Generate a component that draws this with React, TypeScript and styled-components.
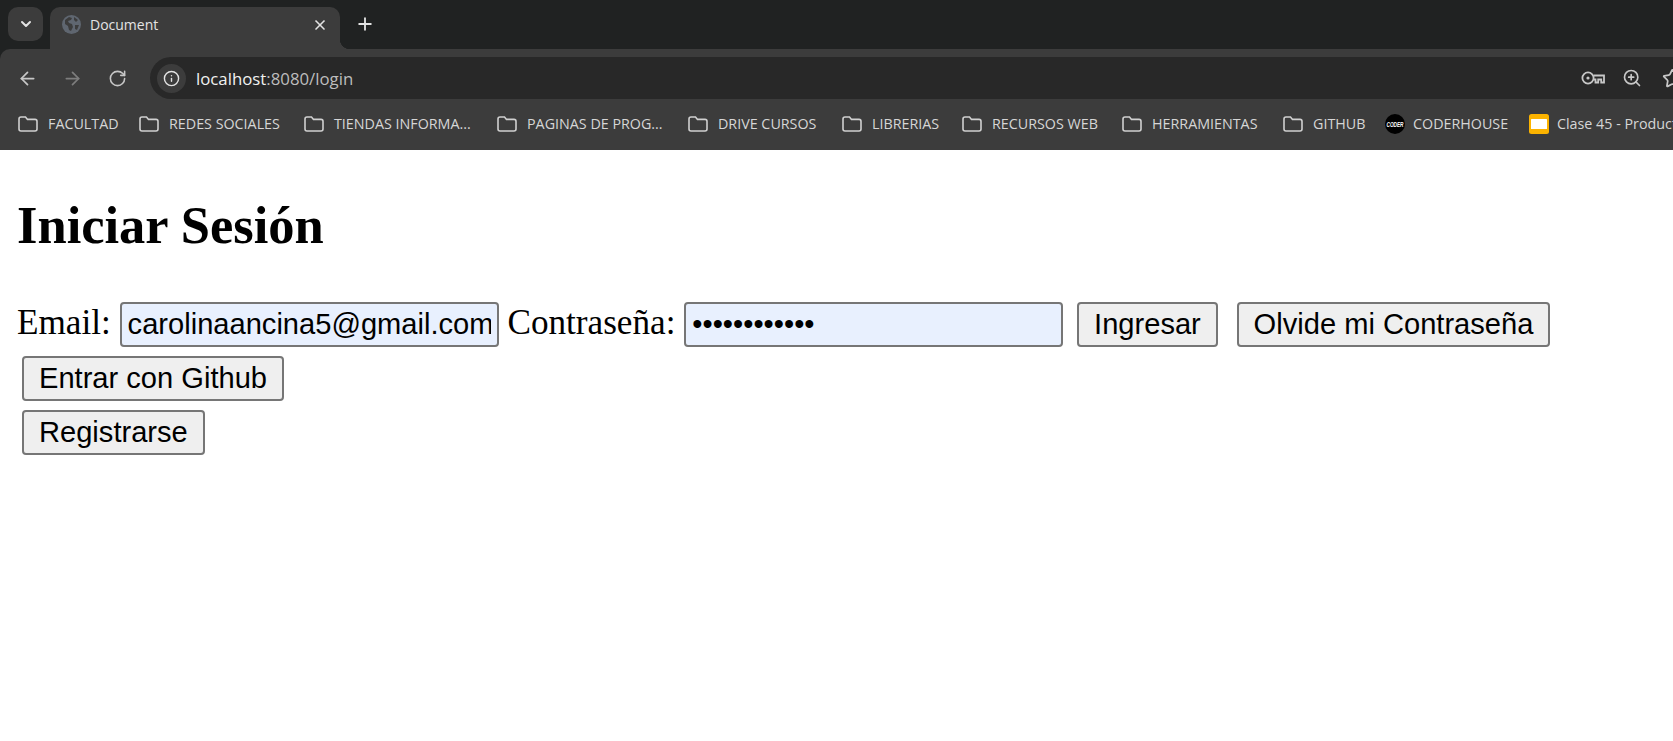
import React from "react";
import { createGlobalStyle, styled } from "styled-components";
import { ArrowLeft, ArrowRight, ChevronDown, Info, Plus, RotateCw, Star, X, ZoomIn } from "lucide-react";

const GlobalStyle = createGlobalStyle`
  html, body {
    margin: 0;
    height: 100%;
    overflow: hidden;
    background: #fff;
  }
`;

const Browser = styled.div`
  background: #202222;
  color: #e3e3e3;
  font-family: "Open Sans", "Noto Sans", sans-serif;
`;

const TabStrip = styled.div`
  height: 49px;
  display: flex;
  align-items: flex-start;
  padding: 7px 0 0 8px;
  box-sizing: border-box;
`;

const TabSearch = styled.div`
  width: 35px;
  height: 34px;
  border-radius: 10px;
  background: #3c3c3c;
  display: flex;
  align-items: center;
  justify-content: center;
  margin-right: 7px;
`;

const Tab = styled.div`
  position: relative;
  width: 290px;
  height: 42px;
  background: #3c3c3c;
  border-radius: 10px 10px 0 0;
  display: flex;
  align-items: center;
  padding: 0 12px 7px 12px;
  box-sizing: border-box;
  font-size: 14px;

  &::after {
    content: "";
    position: absolute;
    right: -10px;
    bottom: 0;
    width: 10px;
    height: 10px;
    background: radial-gradient(circle at 100% 0, transparent 10px, #3c3c3c 10.5px);
  }
`;

const TabTitle = styled.span`
  flex: 1;
  margin-left: 9px;
`;

const NewTab = styled.div`
  width: 50px;
  height: 34px;
  display: flex;
  align-items: center;
  justify-content: center;
`;

const Toolbar = styled.div`
  height: 50px;
  background: #3c3c3c;
  border-radius: 10px 0 0 0;
  display: flex;
  align-items: center;
  padding: 8px 0 0 5px;
  box-sizing: border-box;
`;

const NavButton = styled.div<{ $dim?: boolean }>`
  width: 45px;
  height: 36px;
  display: flex;
  align-items: center;
  justify-content: center;
  color: ${(p) => (p.$dim ? "#7d7d7d" : "#c7c7c7")};
`;

const AddressBar = styled.div`
  flex: 1;
  height: 42px;
  margin-left: 10px;
  background: #282828;
  border-radius: 21px 0 0 21px;
  display: flex;
  align-items: center;
  padding: 0 0 0 7px;
  font-size: 16.8px;
  overflow: hidden;
`;

const SiteInfo = styled.div`
  width: 29px;
  height: 29px;
  border-radius: 50%;
  background: #3c3c3c;
  display: flex;
  align-items: center;
  justify-content: center;
  margin-right: 10px;
`;

const Url = styled.span`
  flex: 1;
  color: #bdbdbd;

  b {
    font-weight: 400;
    color: #f1f1f1;
  }
`;

const AddressActions = styled.div`
  display: flex;
  align-items: center;
  gap: 17px;
  color: #c7c7c7;
  margin-right: -10px;

  svg:last-child {
    margin-left: 3px;
  }
`;

const BookmarksBar = styled.div`
  height: 51px;
  background: #3c3c3c;
  display: flex;
  align-items: center;
  padding: 0 0 2px 18px;
  box-sizing: border-box;
  font-size: 14.3px;
  white-space: nowrap;
  overflow: hidden;
`;

const Bookmark = styled.div<{ $width?: number; $gap?: number }>`
  display: flex;
  align-items: center;
  gap: ${(p) => p.$gap ?? 10}px;
  flex: none;
  width: ${(p) => (p.$width ? `${p.$width}px` : "auto")};
  color: #d6d6d6;
`;

const Page = styled.main`
  padding: 0 17px;
  font-family: "Liberation Serif", "Times New Roman", serif;
  color: #000;
`;

const Title = styled.h1`
  font-size: 52.5px;
  font-weight: 700;
  line-height: 61px;
  margin: 45px 0 46px;
`;

const Line = styled.div`
  font-size: 35.2px;
  line-height: 40px;
  min-height: 54px;
`;

const Field = styled.input<{ $width: number }>`
  width: ${(p) => p.$width}px;
  height: 45px;
  box-sizing: border-box;
  padding: 1px 6px;
  border: 2px solid #767676;
  border-radius: 4px;
  background: #e8f0fe;
  color: #000;
  font-family: "Liberation Sans", Arial, sans-serif;
  font-size: 29.1px;
  outline: none;
`;

const FormButton = styled.button`
  height: 45px;
  margin: 0 5px;
  padding: 1px 15px;
  border: 2px solid #767676;
  border-radius: 4px;
  background: #efefef;
  color: #000;
  font-family: "Liberation Sans", Arial, sans-serif;
  font-size: 29.1px;
`;

const FolderIcon = () => (
  <svg width="20" height="16" viewBox="0 0 20 16" fill="none" stroke="#d0d0d0" strokeWidth="1.6">
    <path d="M1 3a2 2 0 0 1 2-2h4.5l2 2.4H17a2 2 0 0 1 2 2V13a2 2 0 0 1-2 2H3a2 2 0 0 1-2-2Z" />
  </svg>
);

const GlobeIcon = () => (
  <svg width="19" height="19" viewBox="0 0 19 19">
    <circle cx="9.5" cy="9.5" r="9.5" fill="#5f6670" />
    <path d="M3 5l4-3 3 1-1 2-3 1 1 2 3 1 1 3-2 4-2-1-1-4-3-2Z" fill="#3c3c3c" />
    <path d="M12 2l4 3-2 2-2-2ZM13 10h4l-2 5-2-1Z" fill="#3c3c3c" />
  </svg>
);

const KeyIcon = () => (
  <svg width="24" height="14" viewBox="0 0 24 14" fill="none" stroke="#c7c7c7" strokeWidth="1.8">
    <circle cx="7" cy="7" r="5.6" />
    <circle cx="7" cy="7" r="1.6" fill="#c7c7c7" stroke="none" />
    <path d="M12.5 4.5H23v7h-2.8V8.5h-3v3h-2.7V8.5h-2" />
  </svg>
);

const CoderIcon = () => (
  <svg width="20" height="20" viewBox="0 0 20 20">
    <circle cx="10" cy="10" r="10" fill="#000" />
    <text
      x="10"
      y="12.8"
      textAnchor="middle"
      textLength="17"
      lengthAdjust="spacingAndGlyphs"
      fontFamily="'Liberation Sans', sans-serif"
      fontWeight="700"
      fontStyle="italic"
      fontSize="8"
      fill="#fff"
    >
      CODER
    </text>
  </svg>
);

const SlidesIcon = () => (
  <svg width="20" height="20" viewBox="0 0 20 20">
    <rect width="20" height="20" rx="2.5" fill="#fbb300" />
    <rect x="2" y="5" width="16" height="10" rx="0.5" fill="#fff" />
  </svg>
);

const folders = [
  { label: "FACULTAD", width: 121 },
  { label: "REDES SOCIALES", width: 165 },
  { label: "TIENDAS INFORMA...", width: 193 },
  { label: "PAGINAS DE PROG...", width: 191 },
  { label: "DRIVE CURSOS", width: 154 },
  { label: "LIBRERIAS", width: 120 },
  { label: "RECURSOS WEB", width: 160 },
  { label: "HERRAMIENTAS", width: 161 },
  { label: "GITHUB", width: 102 },
];

const App: React.FC = () => {
  return (
    <>
      <GlobalStyle />
      <Browser>
        <TabStrip>
          <TabSearch>
            <ChevronDown size={16} strokeWidth={3} />
          </TabSearch>
          <Tab>
            <GlobeIcon />
            <TabTitle>Document</TabTitle>
            <X size={16} strokeWidth={2.5} />
          </Tab>
          <NewTab>
            <Plus size={20} strokeWidth={2.2} />
          </NewTab>
        </TabStrip>
        <Toolbar>
          <NavButton>
            <ArrowLeft size={21} />
          </NavButton>
          <NavButton $dim>
            <ArrowRight size={21} />
          </NavButton>
          <NavButton>
            <RotateCw size={19} />
          </NavButton>
          <AddressBar>
            <SiteInfo>
              <Info size={17} />
            </SiteInfo>
            <Url>
              <b>localhost</b>:8080/login
            </Url>
            <AddressActions>
              <KeyIcon />
              <ZoomIn size={20} />
              <Star size={21} />
            </AddressActions>
          </AddressBar>
        </Toolbar>
        <BookmarksBar>
          {folders.map((f) => (
            <Bookmark key={f.label} $width={f.width}>
              <FolderIcon />
              <span>{f.label}</span>
            </Bookmark>
          ))}
          <Bookmark $width={144} $gap={8}>
            <CoderIcon />
            <span>CODERHOUSE</span>
          </Bookmark>
          <Bookmark $gap={8}>
            <SlidesIcon />
            <span>Clase 45 - Productos</span>
          </Bookmark>
        </BookmarksBar>
      </Browser>
      <Page>
        <Title>Iniciar Sesión</Title>
        <form>
          <Line>
            Email: <Field $width={379} type="email" value="carolinaancina5@gmail.com" readOnly />{" "}
            Contraseña: <Field $width={379} type="password" value="contraseña12" readOnly />{" "}
            <FormButton type="button">Ingresar</FormButton>{" "}
            <FormButton type="button">Olvide mi Contraseña</FormButton>
          </Line>
          <Line>
            <FormButton type="button">Entrar con Github</FormButton>
          </Line>
          <Line>
            <FormButton type="button">Registrarse</FormButton>
          </Line>
        </form>
      </Page>
    </>
  );
};

export default App;
